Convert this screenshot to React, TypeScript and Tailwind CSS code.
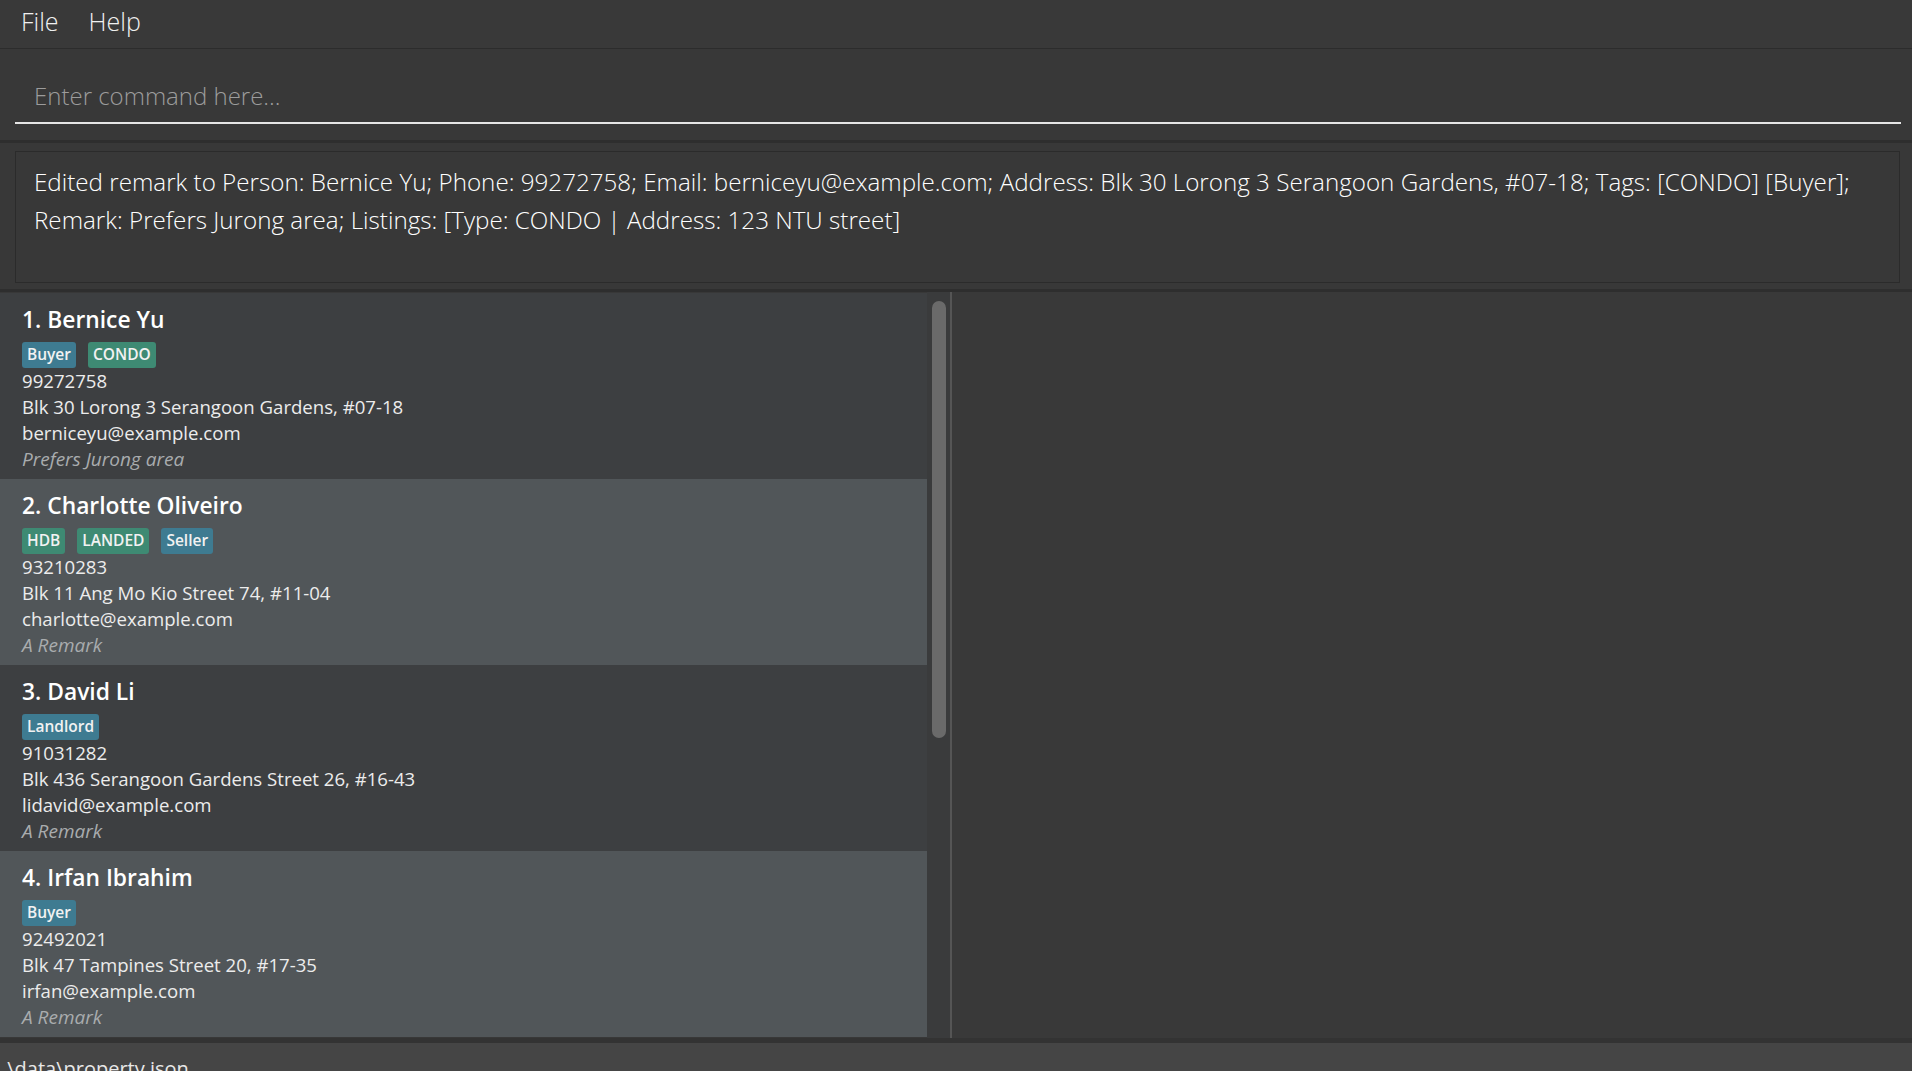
import React from 'react'

// -----------------------------------------------
// Data
// -----------------------------------------------
type TagKind = 'role' | 'property'

type Person = {
  name: string
  tags: { label: string; kind: TagKind }[]
  phone: string
  address: string
  email: string
  remark: string
}

const persons: Person[] = [
  {
    name: 'Bernice Yu',
    tags: [
      { label: 'Buyer', kind: 'role' },
      { label: 'CONDO', kind: 'property' },
    ],
    phone: '99272758',
    address: 'Blk 30 Lorong 3 Serangoon Gardens, #07-18',
    email: 'berniceyu@example.com',
    remark: 'Prefers Jurong area',
  },
  {
    name: 'Charlotte Oliveiro',
    tags: [
      { label: 'HDB', kind: 'property' },
      { label: 'LANDED', kind: 'property' },
      { label: 'Seller', kind: 'role' },
    ],
    phone: '93210283',
    address: 'Blk 11 Ang Mo Kio Street 74, #11-04',
    email: 'charlotte@example.com',
    remark: 'A Remark',
  },
  {
    name: 'David Li',
    tags: [{ label: 'Landlord', kind: 'role' }],
    phone: '91031282',
    address: 'Blk 436 Serangoon Gardens Street 26, #16-43',
    email: 'lidavid@example.com',
    remark: 'A Remark',
  },
  {
    name: 'Irfan Ibrahim',
    tags: [{ label: 'Buyer', kind: 'role' }],
    phone: '92492021',
    address: 'Blk 47 Tampines Street 20, #17-35',
    email: 'irfan@example.com',
    remark: 'A Remark',
  },
]

const resultText =
  'Edited remark to Person: Bernice Yu; Phone: 99272758; Email: berniceyu@example.com; Address: Blk 30 Lorong 3 Serangoon Gardens, #07-18; Tags: [CONDO] [Buyer]; Remark: Prefers Jurong area; Listings: [Type: CONDO | Address: 123 NTU street]'

// -----------------------------------------------
// Tag
// -----------------------------------------------
function Tag({ label, kind }: { label: string; kind: TagKind }) {
  const bg = kind === 'role' ? 'bg-[#3e7b91]' : 'bg-[#3e8a73]'
  return (
    <span className={`${bg} h-[26px] px-[5px] rounded-[3px] flex items-center text-[15.5px] font-semibold text-[#f2f2f2]`}>
      {label}
    </span>
  )
}

// -----------------------------------------------
// PersonCard
// -----------------------------------------------
function PersonCard({ person, index }: { person: Person; index: number }) {
  const bg = index % 2 === 0 ? 'bg-[#3d3f41]' : 'bg-[#515659]'
  return (
    <div className={`${bg} h-[186px] pl-[22px] pt-[12px] flex flex-col`}>
      <div className="h-[30px] flex items-center text-[22.8px] font-semibold text-white">
        {index + 1}. {person.name}
      </div>
      <div className="mt-[7px] flex gap-[12px]">
        {person.tags.map((t) => (
          <Tag key={t.label} label={t.label} kind={t.kind} />
        ))}
      </div>
      <div className="text-[18.6px] leading-[26px] text-[#ececec]">
        <div>{person.phone}</div>
        <div>{person.address}</div>
        <div>{person.email}</div>
        <div className="italic text-[19px] text-[#a9acae]">{person.remark}</div>
      </div>
    </div>
  )
}

// -----------------------------------------------
// App
// -----------------------------------------------
export default function App() {
  return (
    <div className="w-full h-[1071px] overflow-hidden flex flex-col bg-[#383838] font-['Open_Sans',sans-serif]">
      {/* Menu bar */}
      <div className="h-[49px] shrink-0 border-b border-[#2c2c2c] bg-[#393939] flex items-center pb-[4px] pl-[21px] gap-[30px] text-[25px] font-light text-[#f0f0f0]">
        <span>File</span>
        <span>Help</span>
      </div>

      {/* Command box */}
      <div className="h-[94px] shrink-0 pl-[15px] pr-[11px] pt-[21px] border-b-[3px] border-[#2e2e2e]">
        <div className="h-[54px] border-b-2 border-[#e6e6e6] flex items-center pl-[19px] text-[24px] font-light text-[#9c9c9c]">
          Enter command here...
        </div>
      </div>

      {/* Result display */}
      <div className="h-[149px] shrink-0 pt-[8px] pl-[15px] pr-[12px] border-b-[3px] border-[#2e2e2e]">
        <div className="h-[132px] border border-[#2b2b2b] pl-[18px] pr-[14px] pt-[11px] text-[24.2px] leading-[38px] font-light text-white">
          {resultText}
        </div>
      </div>

      {/* Main */}
      <div className="flex-1 min-h-0 flex">
        <div className="w-[927px] flex flex-col pt-[1px]">
          {persons.map((p, i) => (
            <PersonCard key={p.name} person={p} index={i} />
          ))}
        </div>
        <div className="w-[23px] bg-[#3a3b3c] pt-[9px] pl-[5px]">
          <div className="w-[14px] h-[437px] rounded-full bg-[#6a6a6a]" />
        </div>
        <div className="w-[2px] bg-[#555555]" />
        <div className="flex-1 bg-[#393939]" />
      </div>

      {/* Status bar */}
      <div className="h-[33px] shrink-0 border-t-[5px] border-[#333333] bg-[#454545] pl-[2px] pt-[12px] text-[20px] leading-[28px] text-[#e8e8e8] whitespace-nowrap">
        .\data\property.json
      </div>
    </div>
  )
}
